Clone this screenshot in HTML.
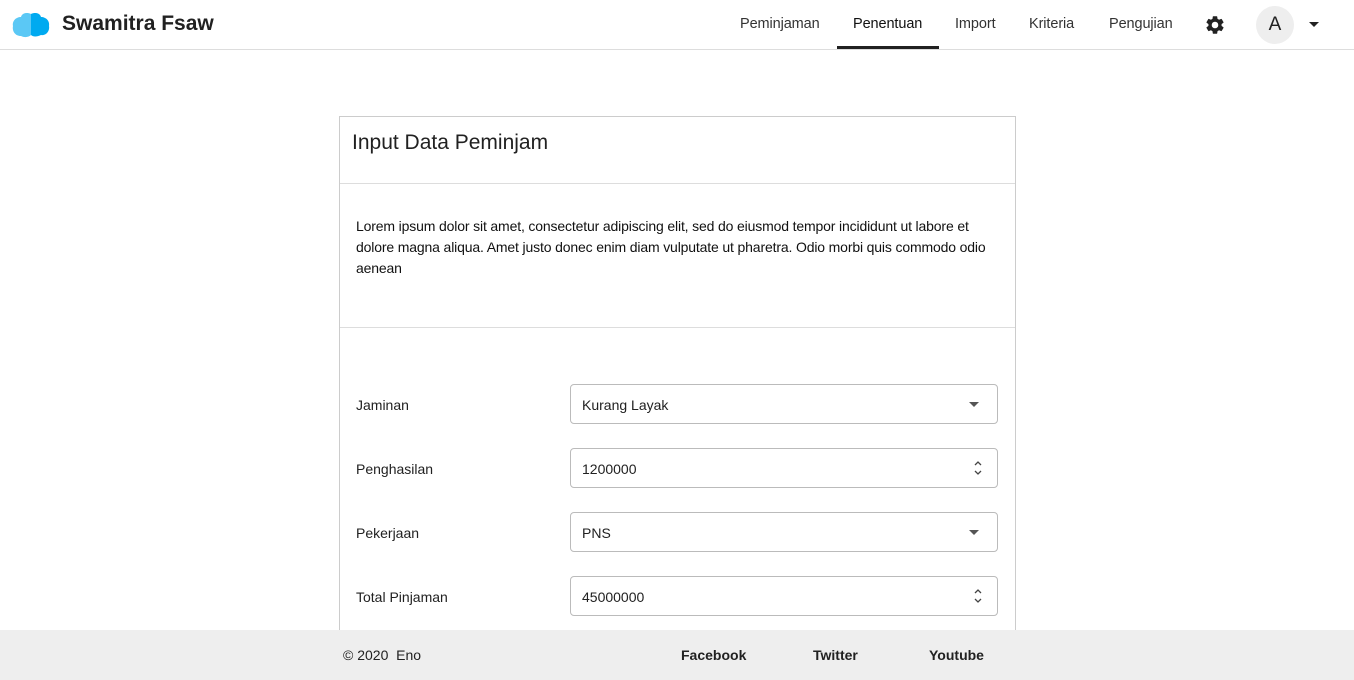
<!DOCTYPE html>
<html><head><style>
*{box-sizing:border-box;margin:0;padding:0}
html,body{width:1354px;height:680px;overflow:hidden}
body{font-family:"Liberation Sans",sans-serif;background:#fff;color:#212121;position:relative}
.hdr{position:absolute;top:0;left:0;width:1354px;height:50px;border-bottom:1px solid #ddd;background:#fff}
.brand{position:absolute;left:62px;top:12px;font-size:21px;font-weight:bold;color:#212121}
.nav a{position:absolute;top:16px;font-size:14.5px;color:#333;text-decoration:none;letter-spacing:-0.1px}
.act{position:absolute;left:837px;top:46px;width:102px;height:3px;background:#212121}
.av{position:absolute;left:1256px;top:6px;width:38px;height:38px;border-radius:50%;background:#eee;text-align:center;line-height:38px;font-size:19px}
.card{position:absolute;left:339px;top:116px;width:677px;height:520px;border:1px solid #ccc}
.card h2{font-weight:normal;font-size:21px;position:absolute;left:12px;top:14px}
.sep{position:absolute;left:0;width:675px;height:1px;background:#ddd}
.p{position:absolute;left:16px;top:99px;width:640px;font-size:14px;line-height:21px;color:#111;letter-spacing:-0.15px}
.lbl{position:absolute;left:16px;font-size:14px}
.inp{position:absolute;left:230px;width:428px;height:40px;border:1px solid #bbb;border-radius:4px;font-size:14px;padding:12px 11px}
.tri{position:absolute;right:18px;top:17px;border-left:5px solid transparent;border-right:5px solid transparent;border-top:5px solid #555}
.spin{position:absolute;right:14px;top:9px}
.ft{position:absolute;left:0;top:630px;width:1354px;height:50px;background:#eee;font-size:14px}
.ft span{position:absolute;top:17px}
</style></head><body>
<div class="hdr">
<svg style="position:absolute;left:12px;top:12px" width="38" height="26" viewBox="0 0 38 26"><path d="M19 2 C15 0 10 1 9 5 C4 5 0 9 1 14 C0 19 3 24 9 24 C13 26 17 25 19 23Z" fill="#5bc8f5"/><path d="M19 2 C23 0 28 1 29 5 C34 5 38 9 37 14 C38 19 34 24 29 23 C25 25 21 25 19 23Z" fill="#00aaf0"/></svg>
<div class="brand">Swamitra Fsaw</div>
<div class="nav"><a style="left:740px">Peminjaman</a><a style="left:853px;color:#111">Penentuan</a><a style="left:955px">Import</a><a style="left:1029px">Kriteria</a><a style="left:1109px">Pengujian</a></div>
<div class="act"></div>
<svg style="position:absolute;left:1204px;top:14px" width="22" height="22" viewBox="0 0 24 24"><path fill="#222" d="M19.14 12.94c.04-.3.06-.61.06-.94 0-.32-.02-.64-.07-.94l2.03-1.58a.49.49 0 0 0 .12-.61l-1.92-3.32a.49.49 0 0 0-.59-.22l-2.39.96c-.5-.38-1.03-.7-1.620-.94l-.36-2.54a.48.48 0 0 0-.48-.41h-3.84c-.24 0-.43.17-.47.41l-.36 2.54c-.59.24-1.13.57-1.62.94l-2.39-.96a.49.49 0 0 0-.59.22L2.74 8.87a.47.47 0 0 0 .12.61l2.03 1.58c-.05.3-.09.63-.09.94s.02.64.07.94l-2.03 1.58a.49.49 0 0 0-.12.61l1.92 3.32c.12.22.37.29.59.22l2.39-.96c.5.38 1.03.7 1.62.94l.36 2.54c.05.24.24.41.48.41h3.84c.24 0 .44-.17.47-.41l.36-2.54c.59-.24 1.13-.56 1.62-.94l2.39.96c.22.08.47 0 .59-.22l1.92-3.32a.47.47 0 0 0-.12-.61l-2.010-1.58zM12 15.6a3.6 3.6 0 1 1 0-7.2 3.6 3.6 0 0 1 0 7.2z"/></svg>
<div class="av">A</div>
<div style="position:absolute;left:1309px;top:22px;border-left:5px solid transparent;border-right:5px solid transparent;border-top:5px solid #222"></div>
</div>
<div class="card">
<h2>Input Data Peminjam</h2>
<div class="sep" style="top:66px"></div>
<div class="p">Lorem ipsum dolor sit amet, consectetur adipiscing elit, sed do eiusmod tempor incididunt ut labore et dolore magna aliqua. Amet justo donec enim diam vulputate ut pharetra. Odio morbi quis commodo odio aenean</div>
<div class="sep" style="top:210px"></div>
<div class="lbl" style="top:280px">Jaminan</div><div class="inp" style="top:267px">Kurang Layak<div class="tri"></div></div>
<div class="lbl" style="top:344px">Penghasilan</div><div class="inp" style="top:331px">1200000<svg class="spin" width="10" height="20" viewBox="0 0 10 20"><path d="M2 7 L5 4 L8 7 M2 13 L5 16 L8 13" fill="none" stroke="#444" stroke-width="1.3"/></svg></div>
<div class="lbl" style="top:408px">Pekerjaan</div><div class="inp" style="top:395px">PNS<div class="tri"></div></div>
<div class="lbl" style="top:472px">Total Pinjaman</div><div class="inp" style="top:459px">45000000<svg class="spin" width="10" height="20" viewBox="0 0 10 20"><path d="M2 7 L5 4 L8 7 M2 13 L5 16 L8 13" fill="none" stroke="#444" stroke-width="1.3"/></svg></div>
</div>
<div class="ft"><span style="left:343px">© 2020&nbsp; Eno</span><span style="left:681px;font-weight:bold">Facebook</span><span style="left:813px;font-weight:bold">Twitter</span><span style="left:929px;font-weight:bold">Youtube</span></div>
</body></html>
